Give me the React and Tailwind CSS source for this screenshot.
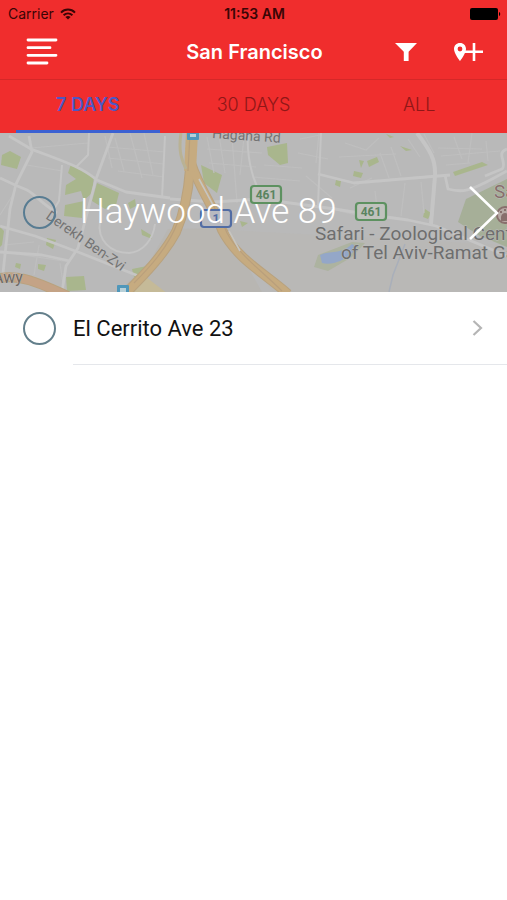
import React, { useState } from 'react';

const tabs = [
  { id: '7', label: '7 DAYS' },
  { id: '30', label: '30 DAYS' },
  { id: 'all', label: 'ALL' },
];

// Status Bar Component
const StatusBar = () => (
  <div className="grid grid-cols-3 items-center h-7 pl-2 pr-1.5 text-[#3a0505]">
    <div className="flex items-center gap-1.5 text-sm">
      <span>Carrier</span>
      <svg className="w-4 h-3" viewBox="0 0 16 12" fill="none" stroke="currentColor" strokeWidth="2">
        <path d="M1 4.6C5 0.6 11 0.6 15 4.6" />
        <path d="M3.6 7.2C6.2 4.8 9.8 4.8 12.4 7.2" />
        <path d="M8 11.6L5.4 9C6.8 7.7 9.2 7.7 10.6 9Z" fill="currentColor" stroke="none" />
      </svg>
    </div>
    <span className="text-sm font-semibold text-center whitespace-nowrap">11:53 AM</span>
    <svg className="w-8 h-3 justify-self-end" viewBox="0 0 32 12" fill="#000">
      <rect x="1" y="0" width="28" height="12" rx="2" />
      <path d="M30 4C31.6 4.4 31.6 7.6 30 8Z" />
    </svg>
  </div>
);

// Nav Bar Component
const NavBar = () => (
  <div className="grid grid-cols-3 items-center h-[51px] pl-[26px] pr-6 pb-1 text-white">
    <button type="button" aria-label="Menu" className="justify-self-start">
      <svg className="w-8 h-7" viewBox="0 0 32 28" stroke="currentColor" strokeWidth="2.8" strokeLinecap="round">
        <path d="M2 2H30M2 9.7H24M2 17.3H30M2 25H21" />
      </svg>
    </button>
    <h1 className="text-xl font-semibold text-center whitespace-nowrap">San Francisco</h1>
    <div className="flex items-center justify-end gap-9">
      <button type="button" aria-label="Filter">
        <svg className="w-[22px] h-5" viewBox="0 0 22 20" fill="currentColor">
          <path d="M0 1H22L13.6 9.8V19H8.8V9.8Z" />
        </svg>
      </button>
      <button type="button" aria-label="Add place">
        <svg className="w-[30px] h-5" viewBox="0 0 30 20">
          <path
            fill="currentColor"
            fillRule="evenodd"
            d="M7 1C3.4 1 1 3.6 1 7C1 11.5 7 19 7 19C7 19 13 11.5 13 7C13 3.6 10.6 1 7 1ZM7 4.6A2.4 2.4 0 1 1 7 9.4A2.4 2.4 0 1 1 7 4.6Z"
          />
          <path d="M12 9.8H30M21 1V19" stroke="currentColor" strokeWidth="2.6" />
        </svg>
      </button>
    </div>
  </div>
);

// Map behind the highlighted address
const MapBackground = () => (
  <svg
    className="absolute inset-0 w-full h-full"
    viewBox="0 0 507 159"
    preserveAspectRatio="xMidYMid slice"
    fill="none"
    fontFamily="Roboto, sans-serif"
    aria-hidden="true"
  >
    <rect width="507" height="159" fill="#b9b9b9" />
    <path d="M168 96L226 95L262 159H118L150 128Z" fill="#b8b6b2" />
    <path d="M226 97L507 112V159H274L236 118Z" fill="#b9b8b6" />

    {/* Parks */}
    <g fill="#a9b68d">
      <path d="M2 22L10 18L21 24L17 36L1 32Z" />
      <path d="M71 31L94 43L92 60L83 68L82 85L64 83L65 72L84 68L81 58L65 62L66 52L76 46L68 40Z" />
      <path d="M97 50L119 60L116 72L105 76L92 68Z" />
      <path d="M128 70L135 66L136 73L130 76ZM141 96L151 102L152 106L142 102Z" />
      <path d="M47 105L56 107L53 116L46 112ZM38 131L46 132L44 138L38 136ZM16 130L21 131L20 136L15 134ZM0 94L4 98L2 112L0 114Z" />
      <path d="M66 144L84 143L86 157L67 158ZM132 136L147 133L140 145L134 144Z" />
      <path d="M201 32L222 42L217 60L204 50ZM267 14L287 10L288 30L280 32L268 22Z" />
      <path d="M336 47L341 48L340 54L335 52ZM354 38L363 40L361 45L353 43ZM359 27L364 28L361 35ZM367 28L377 24L379 29L369 34Z" />
      <path d="M400 13L406 15L412 17L406 18ZM386 1L394 4L390 5ZM453 39L482 29L488 32L455 43Z" />
      <path d="M425 76L431 80L428 86L423 84ZM240 88L248 90L242 94Z" />
    </g>
    <path d="M466 66L507 46V114L480 103L458 89Z" fill="#a6af98" />
    <path d="M318 122L352 109L365 110L352 124L328 138L314 134Z" fill="#adb3a0" />
    <path d="M320 122C331 117 340 122 352 111L357 114C350 125 335 133 322 130Z" fill="#94a7c8" />

    {/* Minor streets */}
    <g stroke="#bfbfbf" strokeWidth="1.2">
      <path d="M105 3L112 35M115 5L124 38M130 0L142 45M144 0L153 42M107 14L165 19M108 25L164 31M118 38L164 44" />
      <path d="M31 15L88 10M27 32L62 38M14 60L0 82M4 112L34 109M10 120L70 129M39 112L34 142M60 130L64 157" />
      <path d="M207 4L214 40M219 2L225 40M232 4L237 70M244 4L240 42M207 16L262 20M209 30L256 34M264 32L302 35M252 44L300 48" />
      <path d="M300 6L320 2M298 20L328 26M306 43L332 65M319 0L316 30M345 10L366 17L379 5M339 24L396 21M350 55L372 45" />
      <path d="M380 20L389 45M391 14L401 43M408 6L420 24M424 1L434 20M454 4L462 26M472 0L468 30M486 8L488 28M340 78L364 84M375 58L378 84" />
      <path d="M438 15L482 16M441 23L500 18M446 32L470 30M405 50L401 83M421 49L424 80" />
    </g>

    {/* Streets */}
    <g stroke="#c5c5c5" strokeWidth="2.8" strokeLinejoin="round">
      <path d="M9 3L31 16C62 28 80 33 97 47L126 59L170 65" />
      <path d="M29 3L32 19L16 51L10 76L3 140" />
      <path d="M0 45L15 52L27 57C36 62 41 70 57 80" />
      <path d="M113 0L96 46L78 115L66 133L62 159" />
      <path d="M0 93L35 103L78 119L141 144" />
      <path d="M62 32L59 68L52 79M89 0L88 22L76 34M165 3L162 65" strokeWidth="2" />
      <path d="M0 119L42 122L70 128" />
      <path d="M100 88C97 107 110 120 129 120C143 119 153 107 155 91" strokeWidth="2" />
      <path d="M170 66L214 69L260 66L335 76L371 82L408 87L436 93L507 123" />
      <path d="M248 0C246 30 256 54 263 66M321 0L318 72" strokeWidth="2" />
      <path d="M318 41L354 50L390 47L450 42" />
      <path d="M417 0C430 17 436 27 435 43L431 91" strokeWidth="4" />
      <path d="M445 42L448 56C462 60 470 58 494 45L507 38" />
      <path d="M507 16C495 20 508 30 502 36L485 43" />
      <path d="M405 111L393 142L389 159" stroke="#a9afba" strokeWidth="1.5" />
    </g>

    {/* Highways */}
    <g strokeLinejoin="round">
      <path d="M134 150L146 144L168 161H128Z" fill="#c5ba98" />
      <g stroke="#b9a27e" strokeWidth="10">
        <path d="M192 0L190 36C188 64 183 83 176 99C163 123 143 143 125 161" />
        <path d="M191 30C199 55 215 76 222 97C237 126 263 139 288 161" />
        <path d="M0 145C22 141 43 152 68 163" />
      </g>
      <g stroke="#c6ab80" strokeWidth="8">
        <path d="M192 0L190 36C188 64 183 83 176 99C163 123 143 143 125 161" />
        <path d="M191 30C199 55 215 76 222 97C237 126 263 139 288 161" />
        <path d="M0 145C22 141 43 152 68 163" stroke="#c4a386" />
      </g>
      <path d="M192 0L190 38" stroke="#c6ab80" strokeWidth="12" />
      <path d="M190 0L188 38M203 54C211 70 220 82 227 100C239 122 262 138 282 158M178 88C169 114 148 136 134 150" stroke="#b99f7c" strokeWidth="1.2" />
      <path d="M199 46L213 72M229 98L240 118" stroke="#c7c5c0" strokeWidth="1.6" />
      <path d="M181 0C178 18 182 28 186 36" stroke="#b9b295" strokeWidth="3" />
    </g>

    {/* Stations */}
    <g fill="#4f97ba">
      <rect x="187" y="-5" width="12" height="12" rx="1" />
      <rect x="117" y="152" width="12" height="10" rx="1" />
    </g>
    <path d="M190 1H196V4H190ZM120 155H126V159H120Z" fill="#b8d0d8" />

    {/* Road shields */}
    <g strokeWidth="2.2" fontSize="12" fontWeight="700" textAnchor="middle">
      <rect x="251" y="53" width="30" height="17" rx="3" fill="#c0c2bd" stroke="#5d9160" />
      <text x="266" y="66" fill="#5a8460">461</text>
      <rect x="356" y="70" width="30" height="17" rx="3" fill="#c0c2bd" stroke="#5d9160" />
      <text x="371" y="83" fill="#5a8460">461</text>
      <rect x="201" y="77" width="30" height="17" rx="3" fill="#b8bac0" stroke="#526da4" />
      <text x="216" y="90" fill="#526da4">1</text>
    </g>

    {/* Place names */}
    <g fill="#737373" stroke="#bcbcbc" strokeWidth="1" paintOrder="stroke">
      <text x="212" y="5" fontSize="14" transform="rotate(4 212 5)">Hagana Rd</text>
      <text x="45" y="85" fontSize="14" transform="rotate(35 45 85)">Derekh Ben-Zvi</text>
      <text x="-7" y="150" fontSize="16" fill="#6f6962">Awy</text>
      <g fontSize="19" fill="#6e6e6e">
        <text x="315" y="107">Safari - Zoological Center</text>
        <text x="341" y="126">of Tel Aviv-Ramat Gan</text>
      </g>
      <text x="494" y="65" fontSize="19" fill="#886f6c">Sa</text>
    </g>
    <g stroke="#886f6c" strokeWidth="2">
      <circle cx="505" cy="82" r="8" fill="#b7aaa5" />
      <path d="M502 84C503 80 507 80 509 84V87H502Z" fill="#886f6c" />
      <path d="M501 78V80M505 76V78" />
    </g>
  </svg>
);

const App = () => {
  const [activeTab, setActiveTab] = useState('7');

  return (
    <div className="min-h-screen bg-white font-[Inter,sans-serif] overflow-x-hidden">
      <header className="bg-[#f02d2d]">
        <StatusBar />
        <NavBar />

        {/* Period Tabs */}
        <nav className="grid grid-cols-3 h-[54px] px-[5px] border-t border-[#d52828]">
          {tabs.map((tab) => (
            <button
              key={tab.id}
              type="button"
              onClick={() => setActiveTab(tab.id)}
              className={
                activeTab === tab.id
                  ? 'mx-[11px] text-lg font-semibold text-[#4d58c4] border-b-3 border-[#3b61d2]'
                  : 'mx-[11px] text-lg font-light text-[#8f1717] border-b-3 border-transparent'
              }
            >
              {tab.label}
            </button>
          ))}
        </nav>
      </header>

      <main>
        {/* Highlighted Address */}
        <section className="relative h-[159px] overflow-hidden">
          <MapBackground />
          <div className="relative flex items-center h-full pl-[23px] pr-2">
            <input
              id="haywood"
              type="checkbox"
              className="appearance-none shrink-0 w-[33px] h-[33px] rounded-full border-2 border-[#587c92] checked:bg-[#587c92]"
            />
            <label
              htmlFor="haywood"
              className="flex-1 pl-6 font-[Roboto,sans-serif] text-[35px] font-light text-white whitespace-nowrap"
            >
              Haywood Ave 89
            </label>
            <button type="button" aria-label="Open Haywood Ave 89">
              <svg className="w-[30px] h-14" viewBox="0 0 30 56" fill="none" stroke="#fff" strokeWidth="2.6">
                <path d="M1 2L28 28L1 54" />
              </svg>
            </button>
          </div>
        </section>

        {/* Address List */}
        <ul>
          <li className="flex h-[73px] pl-[23px]">
            <input
              id="cerrito"
              type="checkbox"
              className="appearance-none shrink-0 self-center w-[33px] h-[33px] rounded-full border-2 border-[#637f8b] checked:bg-[#637f8b]"
            />
            <div className="flex flex-1 items-center ml-[17px] pr-6 border-b border-gray-200">
              <label
                htmlFor="cerrito"
                className="flex-1 font-[Roboto,sans-serif] text-[22px] text-[#111] whitespace-nowrap"
              >
                El Cerrito Ave 23
              </label>
              <button type="button" aria-label="Open El Cerrito Ave 23">
                <svg className="w-[11px] h-4" viewBox="0 0 11 16" fill="none" stroke="#b5b5b5" strokeWidth="2.2">
                  <path d="M1.5 1L9 8L1.5 15" />
                </svg>
              </button>
            </div>
          </li>
        </ul>
      </main>
    </div>
  );
};

export default App;
